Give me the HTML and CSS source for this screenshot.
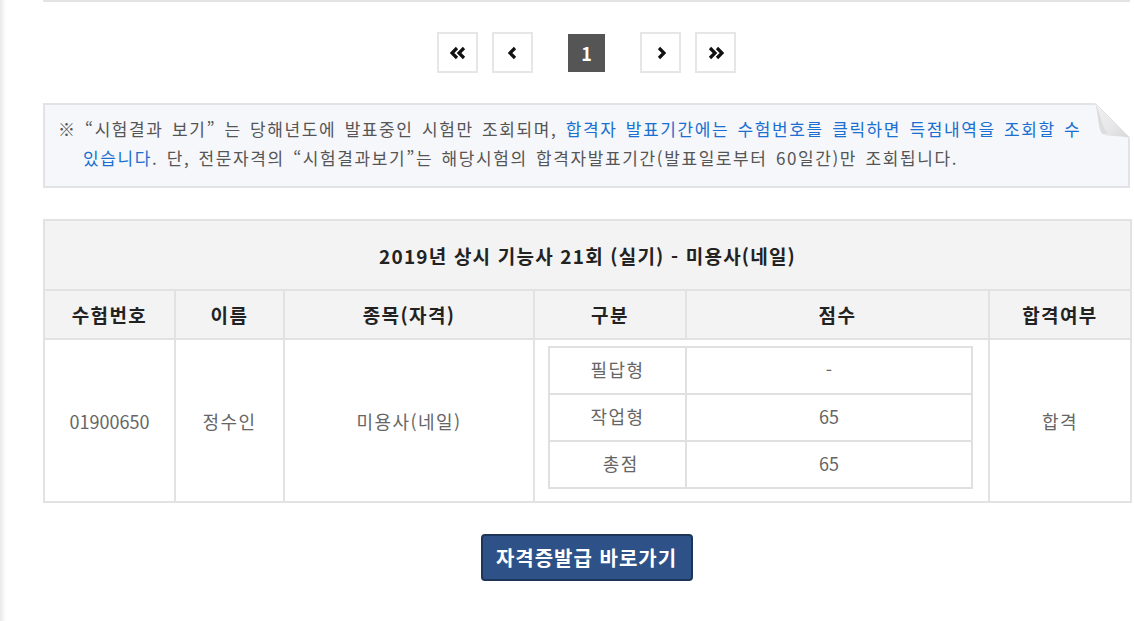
FILE: index.html
```html
<!DOCTYPE html>
<html lang="ko">
<head>
<meta charset="utf-8">
<title>시험결과</title>
<link rel="stylesheet" href="styles.css">
</head>
<body>
<div class="page">
  <div class="topline"></div>

  <nav class="pager">
    <a class="pg pg-first" href="#"><svg width="16" height="14" viewBox="0 0 16 14"><polyline points="7,2 2,7 7,12"/><polyline points="14,2 9,7 14,12"/></svg></a>
    <a class="pg pg-prev" href="#"><svg width="10" height="14" viewBox="0 0 10 14"><polyline points="7,2 2,7 7,12"/></svg></a>
    <span class="pg-current">1</span>
    <a class="pg pg-next" href="#"><svg width="10" height="14" viewBox="0 0 10 14"><polyline points="3,2 8,7 3,12"/></svg></a>
    <a class="pg pg-last" href="#"><svg width="16" height="14" viewBox="0 0 16 14"><polyline points="2,2 7,7 2,12"/><polyline points="9,2 14,7 9,12"/></svg></a>
  </nav>

  <div class="notice">
    <p class="notice-text">※ “시험결과 보기” 는 당해년도에 발표중인 시험만 조회되며, <span class="hl">합격자 발표기간에는 수험번호를 클릭하면 득점내역을 조회할 수<br>있습니다</span>. 단, 전문자격의 “시험결과보기”는 해당시험의 합격자발표기간(발표일로부터 60일간)만 조회됩니다.</p>
    <svg class="fold" width="36" height="38" viewBox="0 0 36 38">
      <defs>
        <linearGradient id="fg" x1="0" y1="0" x2="1" y2="1">
          <stop offset="0" stop-color="#f1f1f3"/>
          <stop offset="0.6" stop-color="#e6e6e8"/>
          <stop offset="1" stop-color="#d6d6d8"/>
        </linearGradient>
      </defs>
      <polygon points="0,0 36,0 36,36" fill="#ffffff"/>
      <path d="M1,0 L36,35 C24,32 14,34 9,31 C4,28 5,12 1,0 Z" fill="url(#fg)"/>
      <path d="M9,31 C4,28 5,12 1,0 C8,14 7,24 14,30 Z" fill="#dcdcde"/>
      <line x1="1" y1="0" x2="36" y2="35" stroke="#e2e2e2" stroke-width="1"/>
    </svg>
  </div>

  <table class="result">
    <colgroup>
      <col class="c1"><col class="c2"><col class="c3"><col class="c4"><col class="c5"><col class="c6">
    </colgroup>
    <thead>
      <tr class="title-row"><th colspan="6">2019년 상시 기능사 21회 (실기) - 미용사(네일)</th></tr>
      <tr class="head-row">
        <th>수험번호</th><th>이름</th><th>종목(자격)</th><th>구분</th><th>점수</th><th>합격여부</th>
      </tr>
    </thead>
    <tbody>
      <tr class="body-row">
        <td class="num">01900650</td>
        <td>정수인</td>
        <td>미용사(네일)</td>
        <td colspan="2" class="score-cell">
          <table class="scores">
            <colgroup><col class="s1"><col class="s2"></colgroup>
            <tr><td>필답형</td><td class="num">-</td></tr>
            <tr><td>작업형</td><td class="num">65</td></tr>
            <tr><td>&nbsp;총점</td><td class="num">65</td></tr>
          </table>
        </td>
        <td>합격</td>
      </tr>
    </tbody>
  </table>

  <div class="actions">
    <a class="btn" href="#">자격증발급 바로가기</a>
  </div>
</div>
</body>
</html>
```

FILE: styles.css
```css
html, body {
  margin: 0;
  padding: 0;
}

body {
  font-family: "Noto Sans CJK KR", "Open Sans", sans-serif;
  color: #555;
  background: linear-gradient(to right, #e9e9e9 0, #f4f4f4 3px, #ffffff 6px);
  min-height: 621px;
}

.page {
  margin-left: 43px;
  width: 1087px;
}

.topline {
  border-top: 2px solid #e3e3e3;
}

/* pagination */
.pager {
  display: flex;
  justify-content: center;
  align-items: center;
  margin-top: 30px;
  height: 41px;
}

.pg {
  box-sizing: border-box;
  width: 41px;
  height: 41px;
  border: 2px solid #e6e6e6;
  background: #fff;
  display: flex;
  align-items: center;
  justify-content: center;
}

.pg svg polyline {
  fill: none;
  stroke: #111;
  stroke-width: 3.2;
}

.pg-first, .pg-next { margin-right: 14px; }
.pg-prev { margin-right: 35px; }

.pg-current {
  box-sizing: border-box;
  width: 37px;
  height: 38px;
  background: #555;
  color: #fff;
  font-weight: 700;
  font-size: 18px;
  display: flex;
  align-items: center;
  justify-content: center;
  margin-right: 35px;
}

/* notice */
.notice {
  position: relative;
  margin-top: 30px;
  background: #f5f7fb;
  border: 2px solid #e2e3e6;
  box-sizing: border-box;
  height: 85px;
}

.notice-text {
  margin: 0;
  padding: 9px 10px 0 38px;
  text-indent: -25px;
  font-size: 17px;
  line-height: 29px;
  letter-spacing: 1.6px;
  word-spacing: 2px;
  color: #555;
  white-space: nowrap;
}

.hl { color: #1a6fd0; }

.fold {
  position: absolute;
  top: -2px;
  right: -2px;
}

/* result table */
.result {
  margin-top: 31px;
  width: 1087px;
  border-collapse: collapse;
  table-layout: fixed;
}

.c1 { width: 131px; }
.c2 { width: 109px; }
.c3 { width: 250px; }
.c4 { width: 152px; }
.c5 { width: 303px; }
.c6 { width: 142px; }

.result th,
.result > tbody > tr > td {
  border: 2px solid #e2e2e2;
  text-align: center;
  padding: 0;
}

.result th {
  background: #f3f3f3;
  color: #222;
  font-weight: 700;
  font-size: 19px;
  letter-spacing: 1.4px;
}

.title-row th {
  height: 68px;
  letter-spacing: 1.2px;
}

.head-row th {
  height: 47px;
}

.body-row > td {
  height: 161px;
  font-size: 18px;
  letter-spacing: 1.4px;
  color: #666;
}

.body-row > td.num {
  letter-spacing: 0;
}

.result > tbody > tr > td.score-cell {
  height: 155px;
  padding: 6px 15px 0 13px;
  vertical-align: top;
}

.scores {
  width: 100%;
  border-collapse: collapse;
  table-layout: fixed;
}

.s1 { width: 137px; }

.scores td {
  border: 2px solid #e0e0e0;
  height: 45px;
  padding: 0;
  text-align: center;
  font-size: 18px;
  letter-spacing: 1.4px;
  color: #666;
  vertical-align: top;
  line-height: 42px;
}

.scores td.num {
  letter-spacing: 0;
}

/* button */
.actions {
  display: flex;
  justify-content: center;
  margin-top: 31px;
}

.btn {
  box-sizing: border-box;
  width: 212px;
  height: 47px;
  background: #2e5287;
  border: 2px solid #1d3558;
  border-radius: 4px;
  color: #fff;
  font-weight: 700;
  font-size: 20px;
  letter-spacing: 1px;
  text-decoration: none;
  display: flex;
  align-items: center;
  justify-content: center;
}
```
